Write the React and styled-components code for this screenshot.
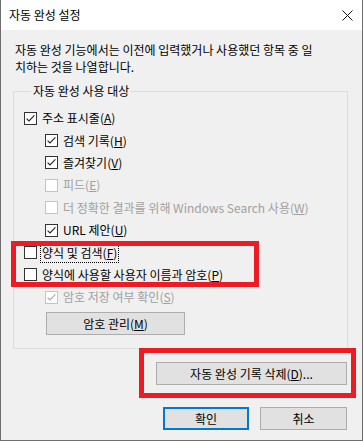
import styled, { createGlobalStyle, css } from 'styled-components';

const GlobalStyle = createGlobalStyle`
  html, body {
    margin: 0;
    padding: 0;
    background: #ffffff;
  }
  body {
    font-family: "Noto Sans CJK KR", "Noto Sans", "Liberation Sans", sans-serif;
    font-size: 12px;
    color: #000;
  }
`;

const Window = styled.div`
  position: relative;
  width: 363px;
  height: 441px;
  box-sizing: border-box;
  border: 1px solid #6e6e6e;
  border-top: none;
  background: #f0f0f0;
  display: flex;
  flex-direction: column;
`;

const TitleBar = styled.div`
  height: 30px;
  flex: none;
  background: #ffffff;
  display: flex;
  align-items: center;
  justify-content: space-between;
  padding: 0 9px 0 8px;
`;

const Title = styled.span`
  font-size: 12px;
  line-height: 16px;
`;

const Body = styled.div`
  padding: 0 14px 0 12px;
  display: flex;
  flex-direction: column;
`;

const Description = styled.p`
  margin: 12px 0 0 2px;
  line-height: 16.5px;
`;

const Group = styled.fieldset`
  margin: 8px 0 0 0;
  padding: 8px 0 13px 10px;
  border: 1px solid #dcdcdc;
  display: flex;
  flex-direction: column;
  min-width: 0;
`;

const Legend = styled.legend`
  margin-left: 7px;
  padding: 0 2px;
  line-height: 16px;
`;

const Row = styled.div`
  height: 22.4px;
  display: flex;
  align-items: center;
  gap: 3px;
  padding-left: ${p => (p.$indent ? 21 : 0)}px;
  color: ${p => (p.$disabled ? '#a0a0a0' : '#000')};
`;

const Box = styled.span`
  width: 13px;
  height: 13px;
  box-sizing: border-box;
  flex: none;
  border: 1px solid ${p => (p.$disabled ? '#c4c4c4' : '#333333')};
  background: #ffffff;
  display: flex;
`;

const Label = styled.span`
  line-height: 16px;
  padding: 1px 1px;
  border: 1px dotted transparent;
  ${p => p.$focus && css`
    border-color: #000;
  `}
`;

const Button = styled.button`
  font: inherit;
  color: #000;
  height: 23px;
  width: ${p => p.$w}px;
  box-sizing: border-box;
  background: #e1e1e1;
  border: 1px solid #adadad;
  padding: 0;
  ${p => p.$default && css`
    border: 2px solid #0078d7;
  `}
`;

const ManageButton = styled(Button)`
  margin: 3px 0 0 22px;
`;

const DeleteRow = styled.div`
  display: flex;
  justify-content: flex-end;
  margin: 13px 1px 0 0;
`;

const Footer = styled.div`
  display: flex;
  justify-content: flex-end;
  gap: 11px;
  margin: 22px 1px 0 0;
`;

const Highlight = styled.div`
  position: absolute;
  box-sizing: border-box;
  border: 5px solid #ed1c24;
  pointer-events: none;
`;

function Check({ disabled }) {
  return (
    <svg width="11" height="11" viewBox="0 0 11 11">
      <polyline
        points="1.6,5.6 4,8 9.4,2.4"
        fill="none"
        stroke={disabled ? '#a8a8a8' : '#222'}
        strokeWidth="1.1"
      />
    </svg>
  );
}

function CheckRow({ checked, disabled, indent, focus, text, hot }) {
  return (
    <Row $indent={indent} $disabled={disabled}>
      <Box $disabled={disabled}>{checked && <Check disabled={disabled} />}</Box>
      <Label $focus={focus}>
        {text}(<u>{hot}</u>)
      </Label>
    </Row>
  );
}

const rows = [
  { text: '주소 표시줄', hot: 'A', checked: true },
  { text: '검색 기록', hot: 'H', checked: true, indent: true },
  { text: '즐겨찾기', hot: 'V', checked: true, indent: true },
  { text: '피드', hot: 'E', disabled: true, indent: true },
  { text: '더 정확한 결과를 위해 Windows Search 사용', hot: 'W', disabled: true, indent: true },
  { text: 'URL 제안', hot: 'U', checked: true, indent: true },
  { text: '양식 및 검색', hot: 'F', focus: true },
  { text: '양식에 사용할 사용자 이름과 암호', hot: 'P' },
  { text: '암호 저장 여부 확인', hot: 'S', checked: true, disabled: true, indent: true },
];

export default function App() {
  return (
    <>
      <GlobalStyle />
      <Window>
        <TitleBar>
          <Title>자동 완성 설정</Title>
          <svg width="11" height="11" viewBox="0 0 11 11">
            <path d="M0.5 0.5 L10.5 10.5 M10.5 0.5 L0.5 10.5" stroke="#111" strokeWidth="1" />
          </svg>
        </TitleBar>
        <Body>
          <Description>
            자동 완성 기능에서는 이전에 입력했거나 사용했던 항목 중 일<br />
            치하는 것을 나열합니다.
          </Description>
          <Group>
            <Legend>자동 완성 사용 대상</Legend>
            {rows.map(r => (
              <CheckRow key={r.hot} {...r} />
            ))}
            <ManageButton $w={139}>
              암호 관리(<u>M</u>)
            </ManageButton>
          </Group>
          <DeleteRow>
            <Button $w={191}>
              자동 완성 기록 삭제(<u>D</u>)...
            </Button>
          </DeleteRow>
          <Footer>
            <Button $w={86} $default>확인</Button>
            <Button $w={87}>취소</Button>
          </Footer>
        </Body>
        <Highlight style={{ left: 10, top: 241, width: 248, height: 46 }} />
        <Highlight style={{ left: 138, top: 348, width: 217, height: 50 }} />
      </Window>
    </>
  );
}
